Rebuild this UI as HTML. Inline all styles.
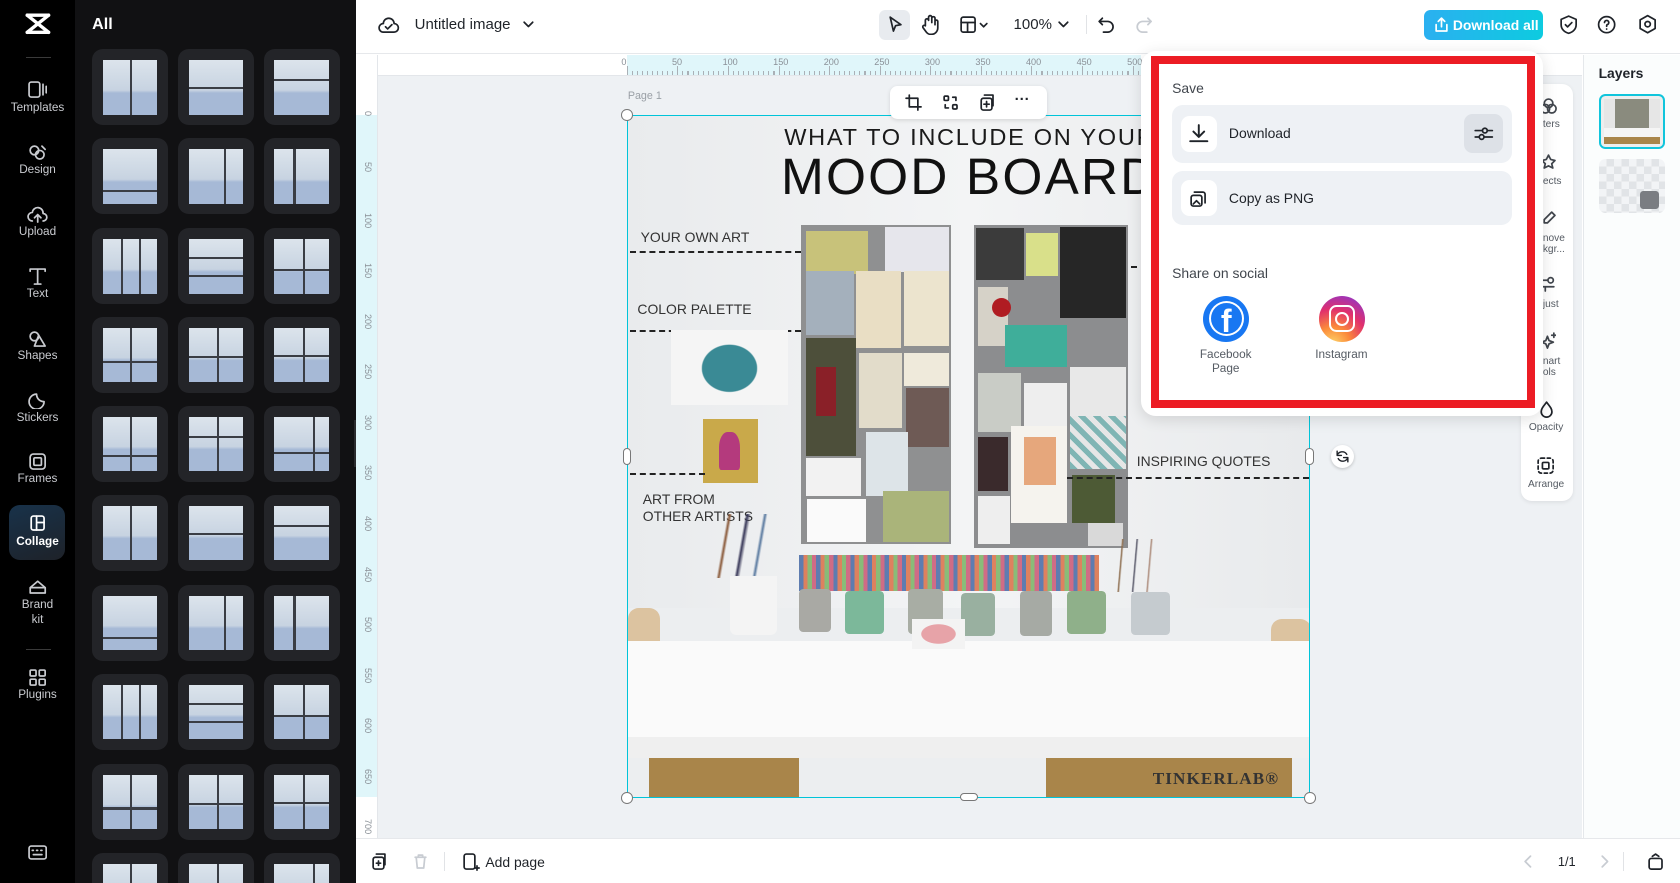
<!DOCTYPE html>
<html><head><meta charset="utf-8"><style>
*{box-sizing:border-box;margin:0;padding:0}
html,body{width:1680px;height:883px;overflow:hidden;background:#fff}
#z{zoom:1.07143;width:1568px;height:824px;position:relative;font-family:"Liberation Sans",sans-serif;overflow:hidden}
.a{position:absolute}
.nav{left:0;top:0;width:70px;height:824px;background:#000}
.ni{position:absolute;left:0;width:70px;text-align:center;color:#c9cbd0;font-size:11px}
.ni svg{display:block;margin:0 auto 2px}
.panel{left:70px;top:0;width:262px;height:824px;background:#111113;overflow:hidden}
.tile{position:absolute;width:71px;height:71px;background:#232428;border-radius:10px}
.tile .im{position:absolute;left:10px;top:10px;width:51px;height:51px;background:linear-gradient(#dce4ec,#c7d3e1 55%,#a6b9d6 60%,#a6b9d6);overflow:hidden}
.tile .v{position:absolute;top:0;bottom:0;width:2px;background:#3a3d44}
.tile .h{position:absolute;left:0;right:0;height:2px;background:#3a3d44}
.top{left:332px;top:0;width:1236px;height:50px;background:#fff;border-bottom:1px solid #e6e8eb}
.ic{stroke:#1f2329;fill:none;stroke-width:1.6;stroke-linecap:round;stroke-linejoin:round}
.row{position:absolute;left:1094px;width:317px;background:#eef1f5;border-radius:10px}
.ib{position:absolute;left:8px;width:34px;height:34px;background:#fff;border-radius:8px}
.tl{position:absolute;left:1440px;font-size:9.5px;color:#555b63;line-height:11px}
</style></head><body><div id="z">
<!-- left nav -->
<div class="a nav">
 <svg class="a" style="left:22px;top:11px" width="26" height="22" viewBox="0 0 26 22"><path d="M3 3h20M3 3l20 16M23 3L3 19M3 19h20" stroke="#fff" stroke-width="3.2" fill="none" stroke-linecap="round"/></svg>
 <div class="a" style="left:24px;top:53px;width:24px;height:1px;background:#3a3a3a"></div>
 <div class="ni" style="top:76px"><svg width="18" height="16" class="ic" style="stroke:#c9cbd0"><rect x="1" y="1" width="10" height="14" rx="2"/><path d="M14 3v10M17 5v6"/></svg>Templates</div>
 <div class="ni" style="top:134px"><svg width="18" height="16" class="ic" style="stroke:#c9cbd0"><circle cx="6" cy="6" r="4"/><circle cx="11" cy="10" r="4"/><path d="M13 2l3 3"/></svg>Design</div>
 <div class="ni" style="top:192px"><svg width="20" height="16" class="ic" style="stroke:#c9cbd0"><path d="M5 14a4 4 0 0 1 0-8 5 5 0 0 1 10 1 3.5 3.5 0 0 1 0 7M10 8v7M7 11l3-3 3 3"/></svg>Upload</div>
 <div class="ni" style="top:250px"><svg width="18" height="16" class="ic" style="stroke:#c9cbd0"><path d="M2 3V1h14v2M9 1v14M6 15h6"/></svg>Text</div>
 <div class="ni" style="top:308px"><svg width="18" height="16" class="ic" style="stroke:#c9cbd0"><circle cx="6" cy="6" r="4"/><path d="M10 5l6 10H6z"/></svg>Shapes</div>
 <div class="ni" style="top:366px"><svg width="18" height="16" class="ic" style="stroke:#c9cbd0"><path d="M15 9a7 7 0 1 1-7-7c0 4 3 7 7 7z"/></svg>Stickers</div>
 <div class="ni" style="top:423px"><svg width="18" height="16" class="ic" style="stroke:#c9cbd0"><rect x="2" y="1" width="14" height="14" rx="3"/><rect x="5.5" y="4.5" width="7" height="7" rx="1"/></svg>Frames</div>
 <div class="a" style="left:8px;top:471px;width:53px;height:52px;border-radius:10px;background:linear-gradient(160deg,#18324a,#1e2229)"></div>
 <div class="ni" style="top:481px;color:#fff;font-weight:bold"><svg width="18" height="16" class="ic" style="stroke:#fff"><rect x="3" y="1" width="12" height="13" rx="2"/><path d="M8 1v13M8 7h7"/></svg>Collage</div>
 <div class="ni" style="top:539px;line-height:14px"><svg width="20" height="16" class="ic" style="stroke:#c9cbd0"><path d="M3 14V9l7-6 7 6v5zM3 9h14"/></svg>Brand<br>kit</div>
 <div class="a" style="left:24px;top:606px;width:24px;height:1px;background:#3a3a3a"></div>
 <div class="ni" style="top:624px"><svg width="18" height="16" class="ic" style="stroke:#c9cbd0"><rect x="2" y="1" width="5.5" height="5.5" rx="1"/><rect x="10.5" y="1" width="5.5" height="5.5" rx="1"/><rect x="2" y="9.5" width="5.5" height="5.5" rx="1"/><rect x="10.5" y="9.5" width="5.5" height="5.5" rx="1"/></svg>Plugins</div>
 <svg class="a ic" style="left:26px;top:789px;stroke:#c9cbd0" width="18" height="14"><rect x="1" y="1" width="16" height="12" rx="2"/><path d="M4 5h1M8 5h1M12 5h1M5 9h8"/></svg>
</div>
<!-- panel -->
<div class="a panel">
 <div class="a" style="left:16px;top:14px;color:#fff;font-weight:bold;font-size:15px">All</div>
 <div id="tiles"></div>
 <div class="a" style="left:260px;top:392px;width:8px;height:44px;background:#2a2b2e;border-radius:0 6px 6px 0"></div>
</div>
<!-- top bar -->
<div class="a top">
 <svg class="a ic" style="left:21px;top:14px" width="20" height="18"><path d="M5 16a4 4 0 0 1 0-8 5 5 0 0 1 10 0 4 4 0 0 1 0 8z"/><path d="M7 11l2 2 4-4"/></svg>
 <div class="a" style="left:55px;top:15px;font-size:14px;color:#1f2329">Untitled image</div>
 <svg class="a ic" style="left:155px;top:18px" width="12" height="10"><path d="M2 3l4 4 4-4"/></svg>
 <div class="a" style="left:488px;top:9px;width:29px;height:28px;background:#e8ebef;border-radius:6px"></div>
 <svg class="a ic" style="left:496px;top:14px" width="16" height="18"><path d="M3 2l10 7-5 1-2 5z"/></svg>
 <svg class="a ic" style="left:527px;top:13px" width="18" height="20"><path d="M5 10V6a1.5 1.5 0 0 1 3 0V3a1.5 1.5 0 0 1 3 0v5-4a1.5 1.5 0 0 1 3 0v6-3a1.3 1.3 0 0 1 2.6 0V13a6 6 0 0 1-6 6H10a5 5 0 0 1-4-2l-3-4a1.4 1.4 0 0 1 2-2z"/></svg>
 <svg class="a ic" style="left:563px;top:14px" width="30" height="18"><rect x="2" y="2" width="13" height="14" rx="2"/><path d="M2 7h13M8 7v9M20 8l3 3 3-3"/></svg>
 <div class="a" style="left:614px;top:15px;font-size:14px;color:#1f2329">100%</div>
 <svg class="a ic" style="left:655px;top:18px" width="12" height="10"><path d="M2 3l4 4 4-4"/></svg>
 <div class="a" style="left:682px;top:14px;width:1px;height:18px;background:#e1e3e6"></div>
 <svg class="a ic" style="left:692px;top:14px" width="18" height="18"><path d="M5 3L2 6l3 3M2 6h8a5 5 0 0 1 0 10H6"/></svg>
 <svg class="a ic" style="left:726px;top:14px;stroke:#c8ccd2" width="18" height="18"><path d="M13 3l3 3-3 3M16 6H8a5 5 0 0 0 0 10h4"/></svg>
 <div class="a" style="left:997px;top:9px;width:111px;height:28px;border-radius:6px;background:linear-gradient(90deg,#2bb0f0,#0dcbe0);color:#fff;font-weight:bold;font-size:13px;line-height:28px;padding-left:27px;white-space:nowrap">Download all</div>
 <svg class="a ic" style="left:1006px;top:15px;stroke:#fff" width="14" height="16"><path d="M7 10V2M4 5l3-3 3 3M2 8v6h10V8"/></svg>
 <svg class="a ic" style="left:1123px;top:13px" width="18" height="20"><path d="M9 2l7 3v5c0 4-3 7-7 8-4-1-7-4-7-8V5z"/><path d="M6 10l2 2 4-4"/></svg>
 <svg class="a ic" style="left:1159px;top:14px" width="20" height="20"><circle cx="9" cy="9" r="7.5"/><path d="M7 7a2 2 0 1 1 2.5 2c-.5.2-.5.6-.5 1.5M9 13v.2"/></svg>
 <svg class="a ic" style="left:1197px;top:13px" width="20" height="20"><path d="M9 1.5l7 4v8l-7 4-7-4v-8z"/><circle cx="9" cy="9.5" r="2.5"/></svg>
</div>
<!-- canvas area -->
<div class="a" style="left:332px;top:51px;width:1145px;height:731px;background:#eef1f4"></div>
<div class="a" style="left:353px;top:51px;width:1124px;height:20px;background:#fff;border-bottom:1px solid #e3e6ea"></div>
<div class="a" style="left:585px;top:51px;width:480px;height:19px;background:#e0f6fa"></div>
<div class="a" style="left:332px;top:51px;width:21px;height:731px;background:#fff;border-right:1px solid #e3e6ea;overflow:hidden"></div>
<div class="a" style="left:332px;top:107px;width:20px;height:637px;background:#e0f6fa"></div>
<div id="rul"></div>
<div class="a" style="left:586px;top:84px;font-size:10px;color:#9aa0a6">Page 1</div>
<!-- image -->
<div class="a" style="left:585px;top:107px;width:638px;height:638px;background:#eceef0;overflow:hidden;border:1.5px solid #00c4d9">
 <div class="a" style="left:0;top:0;width:638px;height:460px;background:linear-gradient(90deg,#e9ebed,#f3f4f5 50%,#e8eaec)"></div>
 <div class="a" style="left:146px;top:8px;font-size:22px;letter-spacing:1.6px;color:#1a1a1a;white-space:nowrap">WHAT TO INCLUDE ON YOUR</div>
 <div class="a" style="left:143px;top:28px;font-size:48px;letter-spacing:2px;color:#111;white-space:nowrap">MOOD BOARD</div>
 <div class="a" style="left:12px;top:106px;font-size:13px;color:#333">YOUR OWN ART</div>
 <div class="a" style="left:2px;top:126px;width:160px;border-top:2.5px dashed #222"></div>
 <div class="a" style="left:9px;top:173px;font-size:13px;color:#333">COLOR PALETTE</div>
 <div class="a" style="left:2px;top:200px;width:160px;border-top:2.5px dashed #222"></div>
 <div class="a" style="left:40px;top:200px;width:110px;height:70px;background:#f5f5f5"></div>
 <div class="a" style="left:55px;top:202px;width:80px;height:62px;background:radial-gradient(ellipse at 50% 55%,#3a8a95 0 45%,transparent 47%)"></div>
 <div class="a" style="left:70px;top:283px;width:52px;height:60px;background:#c9a94a"></div>
 <div class="a" style="left:85px;top:295px;width:20px;height:36px;background:#b43a7d;border-radius:40% 40% 10% 10%"></div>
 <div class="a" style="left:2px;top:334px;width:70px;border-top:2.5px dashed #222"></div>
 <div class="a" style="left:14px;top:350px;font-size:13px;color:#333;line-height:16px">ART FROM<br>OTHER ARTISTS</div>
 <!-- left board -->
 <div class="a" style="left:162px;top:102px;width:140px;height:298px;background:#8f9091"></div>
 <div class="a" style="left:166px;top:108px;width:58px;height:40px;background:#c8c27a"></div>
 <div class="a" style="left:240px;top:104px;width:60px;height:42px;background:#e6e6ec"></div>
 <div class="a" style="left:166px;top:145px;width:45px;height:60px;background:#a4b0bc"></div>
 <div class="a" style="left:213px;top:145px;width:42px;height:72px;background:#e9dec4"></div>
 <div class="a" style="left:258px;top:145px;width:42px;height:70px;background:#ece4ce"></div>
 <div class="a" style="left:166px;top:208px;width:47px;height:110px;background:#4d4f3a"></div>
 <div class="a" style="left:176px;top:235px;width:18px;height:45px;background:#8a2028"></div>
 <div class="a" style="left:216px;top:222px;width:40px;height:70px;background:#e2dcca"></div>
 <div class="a" style="left:258px;top:222px;width:42px;height:30px;background:#efeadb"></div>
 <div class="a" style="left:260px;top:254px;width:40px;height:55px;background:#6e5a55"></div>
 <div class="a" style="left:222px;top:295px;width:40px;height:60px;background:#dde4e8"></div>
 <div class="a" style="left:166px;top:320px;width:52px;height:35px;background:#f2f2f2"></div>
 <div class="a" style="left:167px;top:358px;width:55px;height:40px;background:#fafafa"></div>
 <div class="a" style="left:238px;top:350px;width:62px;height:48px;background:#aab47a"></div>
 <!-- right board -->
 <div class="a" style="left:323px;top:102px;width:144px;height:302px;background:#8c8d8f"></div>
 <div class="a" style="left:325px;top:105px;width:45px;height:48px;background:#3b3b3b"></div>
 <div class="a" style="left:372px;top:110px;width:30px;height:40px;background:#d9e08a"></div>
 <div class="a" style="left:403px;top:104px;width:62px;height:85px;background:#262626"></div>
 <div class="a" style="left:327px;top:160px;width:28px;height:55px;background:#d6d2c8"></div>
 <div class="a" style="left:352px;top:195px;width:58px;height:40px;background:#3fae9a"></div>
 <div class="a" style="left:340px;top:170px;width:18px;height:18px;background:#b01c22;border-radius:50%"></div>
 <div class="a" style="left:327px;top:240px;width:40px;height:55px;background:#c9ccc6"></div>
 <div class="a" style="left:370px;top:250px;width:40px;height:55px;background:#eeeeee"></div>
 <div class="a" style="left:413px;top:235px;width:52px;height:45px;background:#e8e8e8"></div>
 <div class="a" style="left:413px;top:280px;width:52px;height:50px;background:repeating-linear-gradient(45deg,#7fb5b4 0 5px,#e6e6e6 5px 10px)"></div>
 <div class="a" style="left:327px;top:300px;width:28px;height:50px;background:#3a2a2c"></div>
 <div class="a" style="left:358px;top:290px;width:52px;height:90px;background:#f5f3ee"></div>
 <div class="a" style="left:370px;top:300px;width:30px;height:45px;background:#e6a77c"></div>
 <div class="a" style="left:327px;top:355px;width:30px;height:45px;background:#eeeeee"></div>
 <div class="a" style="left:415px;top:335px;width:40px;height:45px;background:#4d5a35"></div>
 <div class="a" style="left:430px;top:380px;width:32px;height:22px;background:#d9d9d9"></div>
 <div class="a" style="left:470px;top:140px;width:5px;border-top:2.5px dashed #222"></div>
 <div class="a" style="left:475px;top:315px;font-size:13px;color:#333;white-space:nowrap">INSPIRING QUOTES</div>
 <div class="a" style="left:410px;top:337px;width:226px;border-top:2.5px dashed #222"></div>
 <!-- pencils & pots -->
 <div class="a" style="left:60px;top:372px;width:100px;height:60px;background:linear-gradient(100deg,transparent 30%,#8a5a3a 32%,transparent 34%,transparent 45%,#3a3a5a 47%,transparent 50%,transparent 60%,#5a7aa0 62%,transparent 64%)"></div>
 <div class="a" style="left:95px;top:430px;width:44px;height:55px;background:#f4f4f4;border-radius:0 0 6px 6px"></div>
 <div class="a" style="left:160px;top:410px;width:280px;height:34px;background:repeating-linear-gradient(90deg,#3a5fa0 0 4px,#d9653a 4px 8px,#6fae5a 8px 12px,#c84a6a 12px 16px);opacity:.8"></div>
 <div class="a" style="left:450px;top:395px;width:50px;height:50px;background:linear-gradient(95deg,transparent 20%,#8a6a4a 22%,transparent 25%,transparent 45%,#556 47%,transparent 50%,transparent 70%,#a87 72%,transparent 75%)"></div>
 <div class="a" style="left:160px;top:442px;width:30px;height:40px;background:#a9a9a4;border-radius:4px"></div>
 <div class="a" style="left:203px;top:444px;width:36px;height:40px;background:#7cb89a;border-radius:4px"></div>
 <div class="a" style="left:262px;top:442px;width:32px;height:42px;background:#a8ada4;border-radius:4px"></div>
 <div class="a" style="left:311px;top:446px;width:32px;height:40px;background:#99b0a0;border-radius:4px"></div>
 <div class="a" style="left:366px;top:444px;width:30px;height:42px;background:#a6aaa4;border-radius:4px"></div>
 <div class="a" style="left:410px;top:444px;width:36px;height:40px;background:#8fb08a;border-radius:4px"></div>
 <div class="a" style="left:470px;top:445px;width:36px;height:40px;background:#c5cbcf;border-radius:4px"></div>
 <div class="a" style="left:0;top:460px;width:30px;height:110px;background:#dcc3a0;border-radius:10px"></div>
 <div class="a" style="left:600px;top:470px;width:38px;height:100px;background:#dcc3a0;border-radius:10px"></div>
 <div class="a" style="left:0;top:490px;width:638px;height:92px;background:#fafafa"></div>
 <div class="a" style="left:0;top:580px;width:638px;height:20px;background:#efefef"></div>
 <div class="a" style="left:265px;top:470px;width:50px;height:28px;background:radial-gradient(ellipse,#e7a3a8 0 45%,#f3f3f3 47%)"></div>
 <div class="a" style="left:20px;top:600px;width:140px;height:38px;background:#a9854a"></div>
 <div class="a" style="left:390px;top:600px;width:230px;height:38px;background:#a9854a"></div>
 <div class="a" style="left:490px;top:610px;font-family:'Liberation Serif',serif;font-weight:bold;font-size:16px;color:#333;letter-spacing:1px">TINKERLAB®</div>
</div>
<!-- handles -->
<div class="a" style="left:580px;top:102px;width:11px;height:11px;border-radius:50%;background:#fff;border:1px solid #777"></div>
<div class="a" style="left:580px;top:739px;width:11px;height:11px;border-radius:50%;background:#fff;border:1px solid #777"></div>
<div class="a" style="left:1217px;top:739px;width:11px;height:11px;border-radius:50%;background:#fff;border:1px solid #777"></div>
<div class="a" style="left:581px;top:418px;width:8px;height:16px;border-radius:4px;background:#fff;border:1px solid #777"></div>
<div class="a" style="left:1218px;top:418px;width:8px;height:16px;border-radius:4px;background:#fff;border:1px solid #777"></div>
<div class="a" style="left:896px;top:740px;width:17px;height:8px;border-radius:4px;background:#fff;border:1px solid #777"></div>
<div class="a" style="left:1242px;top:415px;width:22px;height:22px;border-radius:50%;background:#fff;box-shadow:0 1px 3px rgba(0,0,0,.2)"></div>
<svg class="a ic" style="left:1246px;top:419px" width="14" height="14"><path d="M11 5a5 5 0 0 0-9 1M3 9a5 5 0 0 0 9-1M2 2v4h4M12 12V8H8" stroke-width="1.3"/></svg>
<!-- floating toolbar -->
<div class="a" style="left:831px;top:80px;width:146px;height:31px;background:#fff;border-radius:7px;box-shadow:0 1px 4px rgba(0,0,0,.12)"></div>
<svg class="a ic" style="left:845px;top:88px" width="16" height="16"><path d="M4 1v11h11M1 4h11v11"/></svg>
<svg class="a ic" style="left:879px;top:88px" width="16" height="16"><rect x="2" y="2" width="4" height="4" rx="1"/><rect x="10" y="10" width="4" height="4" rx="1"/><path d="M10 3h3v3M6 13H3v-3"/></svg>
<svg class="a ic" style="left:913px;top:88px" width="16" height="16"><rect x="3" y="4" width="10" height="11" rx="2"/><path d="M6 1h8v10M8 7v5M5.5 9.5h5"/></svg>
<div class="a" style="left:947px;top:85px;font-size:14px;font-weight:bold;color:#1f2329">···</div>
<!-- right tools -->
<div class="a" style="left:1420px;top:78px;width:48px;height:390px;background:#fff;border-radius:10px;box-shadow:0 1px 4px rgba(0,0,0,.08)"></div>
<svg class="a ic" style="left:1437px;top:91px;stroke:#41464d" width="16" height="16"><circle cx="8" cy="5" r="4"/><circle cx="5" cy="10" r="4"/><circle cx="11" cy="10" r="4"/></svg>
<div class="tl" style="top:111px">ters</div>
<svg class="a ic" style="left:1438px;top:143px;stroke:#41464d" width="14" height="16"><path d="M7 2l2 4 4 1-3 3 1 4-4-2-4 2 1-4-3-3 4-1z"/></svg>
<div class="tl" style="top:164px">ects</div>
<svg class="a ic" style="left:1438px;top:196px;stroke:#41464d" width="14" height="16"><path d="M10 2l3 3-7 7H3V9z"/></svg>
<div class="tl" style="top:217px">nove<br>kgr...</div>
<svg class="a ic" style="left:1438px;top:258px;stroke:#41464d" width="14" height="16"><circle cx="9" cy="4" r="2.5"/><path d="M2 4h4M2 10h10M4 10v4"/></svg>
<div class="tl" style="top:279px">just</div>
<svg class="a ic" style="left:1438px;top:310px;stroke:#41464d" width="14" height="16"><path d="M6 4l1.5 4 4 1.5-4 1.5L6 15l-1.5-4-4-1.5 4-1.5zM12 1v4M10 3h4"/></svg>
<div class="tl" style="top:332px">nart<br>ols</div>
<svg class="a ic" style="left:1435px;top:373px" width="16" height="18"><path d="M8 2c3 4 5 6 5 9a5 5 0 0 1-10 0c0-3 2-5 5-9z"/></svg>
<div class="a" style="left:1420px;top:394px;width:46px;text-align:center;font-size:9.5px;color:#555b63">Opacity</div>
<svg class="a ic" style="left:1434px;top:426px" width="18" height="18"><rect x="2" y="2" width="14" height="14" rx="3" stroke-dasharray="3 2.5"/><rect x="6" y="6" width="6" height="6" rx="1"/></svg>
<div class="a" style="left:1420px;top:447px;width:46px;text-align:center;font-size:9.5px;color:#555b63">Arrange</div>
<!-- layers -->
<div class="a" style="left:1477px;top:51px;width:91px;height:731px;background:#fbfdfd;border-left:1px solid #e5e8eb"></div>
<div class="a" style="left:1492px;top:61px;font-size:13px;font-weight:bold;color:#1f2329">Layers</div>
<div class="a" style="left:1492px;top:88px;width:62px;height:51px;border:2px solid #11c5dc;border-radius:6px;background:#eee;padding:3px"><div style="width:100%;height:100%;background:linear-gradient(90deg,transparent 20%,#8a8b7e 20% 80%,transparent 80%) 0 0/100% 65% no-repeat,linear-gradient(#e6e6e6 0 65%,#f5f5f5 65% 85%,#a9854a 85%)"></div></div>
<div class="a" style="left:1492px;top:148px;width:62px;height:51px;border-radius:6px;background:repeating-conic-gradient(#e1e4e7 0 25%,#f2f4f6 0 50%) 0 0/14px 14px"></div>
<div class="a" style="left:1531px;top:178px;width:17px;height:17px;background:#7a7d82;border-radius:3px"></div>
<!-- popup -->
<div class="a" style="left:1065px;top:48px;width:375px;height:340px;background:#fff;border-radius:14px;box-shadow:0 3px 14px rgba(0,0,0,.12)"></div>
<div class="a" style="left:1074px;top:52px;width:359px;height:329px;border:8px solid #ec1c24"></div>
<div class="a" style="left:1094px;top:75px;font-size:13px;color:#41464d">Save</div>
<div class="row" style="top:98px;height:54px"><div class="ib" style="top:10px"></div>
 <svg class="a ic" style="left:14px;top:17px" width="22" height="20"><path d="M11 2v11M6 8l5 5 5-5M3 17h16" stroke-width="1.8"/></svg>
 <div class="a" style="left:53px;top:19px;font-size:13px;color:#1f2329">Download</div>
 <div class="a" style="left:272px;top:8px;width:37px;height:37px;background:#dde1e7;border-radius:8px"></div>
 <svg class="a ic" style="left:280px;top:16px" width="22" height="22"><path d="M3 8h16M3 14h16" /><circle cx="12" cy="8" r="2.2" fill="#dde1e7"/><circle cx="9" cy="14" r="2.2" fill="#dde1e7"/></svg>
</div>
<div class="row" style="top:160px;height:50px"><div class="ib" style="top:8px"></div>
 <svg class="a ic" style="left:16px;top:17px" width="18" height="18"><rect x="2" y="5" width="10" height="10" rx="2"/><path d="M5 2h8a2 2 0 0 1 2 2v8"/><path d="M4 13l3-3 3 3"/></svg>
 <div class="a" style="left:53px;top:17px;font-size:13px;color:#1f2329">Copy as PNG</div>
</div>
<div class="a" style="left:1094px;top:247px;font-size:13px;color:#41464d">Share on social</div>
<div class="a" style="left:1123px;top:276px;width:43px;height:43px;border-radius:50%;background:#1877f2"></div>
<div class="a" style="left:1128px;top:281px;width:33px;height:33px;border-radius:50%;background:#fff"></div>
<div class="a" style="left:1130px;top:283px;width:29px;height:29px;border-radius:50%;background:#1877f2"></div>
<div class="a" style="left:1130px;top:278px;width:29px;text-align:center;font-weight:bold;font-size:30px;color:#fff;line-height:44px">f</div>
<div class="a" style="left:1104px;top:325px;width:80px;text-align:center;font-size:11px;color:#555b63;line-height:13px">Facebook<br>Page</div>
<div class="a" style="left:1231px;top:276px;width:43px;height:43px;border-radius:50%;background:radial-gradient(circle at 30% 105%,#fdd56a 0,#fb8a3a 30%,#e1306c 60%,#a134b5 85%,#6a3ad0)"></div>
<div class="a" style="left:1240px;top:285px;width:25px;height:25px;border-radius:7px;border:2.5px solid #fff"></div>
<div class="a" style="left:1246px;top:291px;width:13px;height:13px;border-radius:50%;border:2.5px solid #fff"></div>
<div class="a" style="left:1212px;top:325px;width:80px;text-align:center;font-size:11px;color:#555b63">Instagram</div>
<!-- bottom -->
<div class="a" style="left:332px;top:782px;width:1236px;height:42px;background:#fff;border-top:1px solid #e6e8eb"></div>
<svg class="a ic" style="left:346px;top:796px" width="16" height="16"><rect x="2" y="4" width="10" height="11" rx="2"/><path d="M5 1h8v10M5 9.5h4M7 7.5v4"/></svg>
<svg class="a ic" style="left:385px;top:796px;stroke:#c8ccd2" width="14" height="16"><path d="M2 4h10M5 4V2h4v2M3 4l1 10h6l1-10"/></svg>
<div class="a" style="left:414px;top:795px;width:1px;height:18px;background:#e1e3e6"></div>
<svg class="a ic" style="left:431px;top:796px" width="18" height="18"><rect x="2" y="1" width="10" height="14" rx="2"/><path d="M12 14h4M14 12v4"/></svg>
<div class="a" style="left:453px;top:797px;font-size:13px;color:#1f2329">Add page</div>
<svg class="a ic" style="left:1421px;top:797px;stroke:#c8ccd2" width="10" height="14"><path d="M7 2L2 7l5 5"/></svg>
<div class="a" style="left:1454px;top:797px;font-size:12px;color:#1f2329">1/1</div>
<svg class="a ic" style="left:1492px;top:797px;stroke:#c8ccd2" width="10" height="14"><path d="M3 2l5 5-5 5"/></svg>
<div class="a" style="left:1515px;top:795px;width:1px;height:18px;background:#e1e3e6"></div>
<svg class="a ic" style="left:1537px;top:795px" width="16" height="18"><rect x="2" y="6" width="12" height="10" rx="2"/><path d="M5 4l3-2 3 2"/></svg>
</div>
<script>
var t=document.getElementById('tiles'),h='';
var rows=[46,129,213,296,379,462,546,629,713,796],cols=[16,96,176];
var L=[['v50'],['h50'],['h35'],['h75'],['v65'],['v35'],['v33','v66'],['h33','h66'],['h55','v52'],['h60','v50'],['v52','h52r'],['v52','h50l'],['h70','v50'],['h35','v52'],['v70','h65r']];
var k=0;
rows.forEach(function(y){cols.forEach(function(x){
 var l=L[k++%L.length],s='';
 l.forEach(function(p){var d=parseInt(p.slice(1));if(p[0]=='v')s+='<div class="v" style="left:'+d+'%"></div>';else s+='<div class="h" style="top:'+d+'%"></div>';});
 h+='<div class="tile" style="left:'+x+'px;top:'+y+'px"><div class="im">'+s+'</div></div>';
});});
t.innerHTML=h;
var r=document.getElementById('rul'),s='';
var labs=[0,50,100,150,200,250,300,350,400,450,500];
labs.forEach(function(v,i){var x=585+i*47.2;s+='<div class="a" style="left:'+(x-5)+'px;top:53px;font-size:8.5px;color:#8a9097">'+v+'</div>';});
for(var i=0;i<102;i++){var x=585+i*4.72;s+='<div class="a" style="left:'+x+'px;top:'+(i%10==0?62:66)+'px;width:1px;height:'+(i%10==0?8:4)+'px;background:#aab0b6"></div>';}
for(var j=0;j<15;j++){var y=107+j*47.2;s+='<div class="a" style="font-size:8.5px;color:#8a9097;transform:rotate(90deg);transform-origin:left top;white-space:nowrap;left:348px;top:'+(y-3)+'px">'+(j*50)+'</div>';}
r.innerHTML=s;
</script>
</body></html>
